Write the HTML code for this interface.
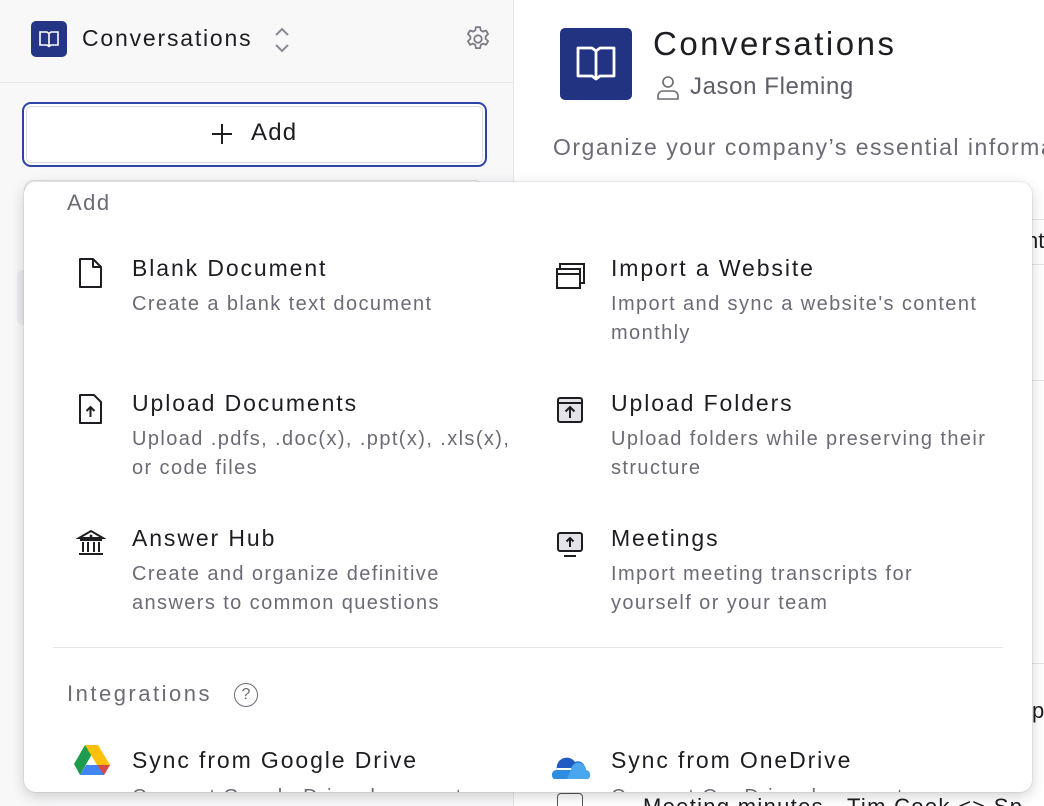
<!DOCTYPE html>
<html><head><meta charset="utf-8"><style>
*{box-sizing:border-box;margin:0;padding:0}
html,body{width:1044px;height:806px;overflow:hidden}
body{position:relative;background:#fff;font-family:"Liberation Sans",sans-serif;color:#1d1d22}
.side{position:absolute;left:0;top:0;width:514px;height:806px;background:#f8f8f9;border-right:1px solid #e6e6ea}
.abs{position:absolute}
.t{font-size:23px;color:#1d1d22;letter-spacing:1.9px;white-space:nowrap}
.d{font-size:20px;color:#6b6b76;line-height:29px;letter-spacing:1.4px}
.ic{position:absolute}
</style></head><body>
<div class="side">
  <div class="abs" style="left:31px;top:21px;width:36px;height:36px;background:#233584;border-radius:5px"></div>
  <svg class="abs" style="left:38px;top:29px" width="22" height="20" viewBox="0 0 22 20"><path d="M2 3h7l2 1.5 2-1.5h7v13h-7l-2 1.5-2-1.5H2z M11 4.5v12.5" fill="none" stroke="#fff" stroke-width="1.6"/></svg>
  <div class="abs" style="left:82px;top:25px;font-size:23px;letter-spacing:1.8px">Conversations</div>
  <svg class="abs" style="left:272px;top:26px" width="20" height="28"><path d="M4 9l6-6 6 6M4 19l6 6 6-6" fill="none" stroke="#8a8a94" stroke-width="2"/></svg>
  <svg class="abs" style="left:463px;top:24px" width="30" height="30" viewBox="0 0 24 24"><path d="M10.3 2.5h3.4l.5 2.6 1.7 1 2.5-.9 1.7 2.9-2 1.8v2l2 1.8-1.7 2.9-2.5-.9-1.7 1-.5 2.6h-3.4l-.5-2.6-1.7-1-2.5.9-1.7-2.9 2-1.8v-2l-2-1.8 1.7-2.9 2.5.9 1.7-1z" fill="none" stroke="#7a7a84" stroke-width="1.4" stroke-linejoin="round"/><circle cx="12" cy="12" r="3" fill="none" stroke="#7a7a84" stroke-width="1.4"/></svg>
  <div class="abs" style="left:0;top:82px;width:514px;height:1px;background:#e6e6ea"></div>
  <div class="abs" style="left:22px;top:102px;width:465px;height:65px;border:2px solid #2e43a8;border-radius:9px;background:#fff;box-shadow:inset 0 0 0 2px #fff,inset 0 0 0 3px #ddd"></div>
  <svg class="abs" style="left:211px;top:123px" width="22" height="22"><path d="M11 1v20M1 11h20" stroke="#1d1d22" stroke-width="2"/></svg>
  <div class="abs" style="left:251px;top:119px;font-size:24px;letter-spacing:1.2px;color:#1d1d22">Add</div>
  <div class="abs" style="left:24px;top:180px;width:460px;height:20px;border:1px solid #ddd;border-radius:10px;background:#fafafa"></div>
  <div class="abs" style="left:17px;top:270px;width:20px;height:55px;background:#ececef;border-radius:6px"></div>
</div>
<div class="abs" style="left:560px;top:28px;width:72px;height:72px;background:#223382;border-radius:5px"></div>
<svg class="abs" style="left:576px;top:46px" width="40" height="36" viewBox="0 0 40 36"><path d="M2 2h14l4 3 4-3h14v28h-14l-4 3-4-3H2z M20 5v28" fill="none" stroke="#fff" stroke-width="2.8" stroke-linejoin="round"/></svg>
<div class="abs" style="left:653px;top:25px;font-size:33px;letter-spacing:2.5px;color:#1d1d22">Conversations</div>
<svg class="abs" style="left:656px;top:75px" width="24" height="26"><circle cx="12" cy="7" r="5" fill="none" stroke="#6b6b76" stroke-width="1.6"/><path d="M2 24v-3a5 5 0 0 1 5-5h10a5 5 0 0 1 5 5v3z" fill="none" stroke="#6b6b76" stroke-width="1.6"/></svg>
<div class="abs" style="left:690px;top:73px;font-size:24px;letter-spacing:0.6px;color:#5e5e69">Jason Fleming</div>
<div class="abs" style="left:553px;top:134px;width:491px;overflow:hidden;font-size:23px;letter-spacing:1.5px;color:#6b6b76;white-space:nowrap">Organize your company’s essential information</div>
<div class="abs" style="left:1032px;top:219px;width:12px;height:1px;background:#e6e6ea"></div>
<div class="abs" style="left:1032px;top:264px;width:12px;height:1px;background:#e6e6ea"></div>
<div class="abs" style="left:1032px;top:380px;width:12px;height:1px;background:#e6e6ea"></div>
<div class="abs" style="left:1032px;top:663px;width:12px;height:1px;background:#e6e6ea"></div>
<div class="abs" style="left:1026px;top:228px;width:18px;overflow:hidden;font-size:22px">nt</div>
<div class="abs" style="left:1032px;top:698px;width:12px;overflow:hidden;font-size:22px">p</div>
<div class="abs" style="left:557px;top:793px;width:26px;height:13px;border:1.5px solid #555;border-bottom:none;border-radius:4px 4px 0 0"></div>
<div class="abs" style="left:643px;top:794px;width:401px;height:12px;overflow:hidden;font-size:22px;letter-spacing:1.3px;white-space:nowrap">Meeting minutes - Tim Cook &lt;&gt; Sp</div>

<div class="abs" style="left:24px;top:182px;width:1008px;height:610px;background:#fff;border-radius:12px;box-shadow:0 4px 14px rgba(0,0,0,.18),0 0 0 1px rgba(0,0,0,.05);overflow:hidden">
  <div class="abs" style="left:43px;top:8px;font-size:22px;letter-spacing:1.5px;color:#6b6b76">Add</div>
  <svg class="ic" style="left:54px;top:75px" width="26" height="32"><path d="M2 2h13l8 8v20H2z M15 2v8h8" fill="none" stroke="#1d1d22" stroke-width="2" stroke-linejoin="round"/></svg>
  <div class="abs t" style="left:108px;top:73px">Blank Document</div>
  <div class="abs d" style="left:108px;top:108px">Create a blank text document</div>
  <svg class="ic" style="left:530px;top:78px" width="32" height="32"><path d="M6 9V4h24v19h-4 M3 9h23v19H3z M3 14h23 M6 9h20" fill="none" stroke="#1d1d22" stroke-width="2"/></svg>
  <div class="abs t" style="left:587px;top:73px">Import a Website</div>
  <div class="abs d" style="left:587px;top:108px;width:380px">Import and sync a website's content monthly</div>

  <svg class="ic" style="left:54px;top:211px" width="26" height="32"><path d="M2 2h14l7 7v21H2z" fill="none" stroke="#1d1d22" stroke-width="2" stroke-linejoin="round"/><path d="M12.5 24v-10M8.5 18l4-4 4 4" fill="none" stroke="#1d1d22" stroke-width="2"/></svg>
  <div class="abs t" style="left:108px;top:208px">Upload Documents</div>
  <div class="abs d" style="left:108px;top:243px;width:380px">Upload .pdfs, .doc(x), .ppt(x), .xls(x), or code files</div>
  <svg class="ic" style="left:531px;top:213px" width="30" height="30"><rect x="3" y="3" width="24" height="24" rx="2" fill="#e4e4e8" stroke="#1d1d22" stroke-width="2"/><path d="M3 8h24" stroke="#1d1d22" stroke-width="2"/><path d="M15 23v-11M10.5 16.5l4.5-4.5 4.5 4.5" fill="none" stroke="#1d1d22" stroke-width="2"/></svg>
  <div class="abs t" style="left:587px;top:208px">Upload Folders</div>
  <div class="abs d" style="left:587px;top:243px;width:400px">Upload folders while preserving their structure</div>

  <svg class="ic" style="left:52px;top:346px" width="30" height="30"><path d="M3 10L15 3l12 7z M4 12h22 M7 14v10M12 14v10M18 14v10M23 14v10 M3 26h24" fill="none" stroke="#1d1d22" stroke-width="2"/><circle cx="15" cy="8" r="1.4" fill="#1d1d22"/></svg>
  <div class="abs t" style="left:108px;top:343px">Answer Hub</div>
  <div class="abs d" style="left:108px;top:378px;width:380px">Create and organize definitive answers to common questions</div>
  <svg class="ic" style="left:531px;top:348px" width="30" height="30"><rect x="3" y="3" width="24" height="18" rx="2" fill="#e4e4e8" stroke="#1d1d22" stroke-width="2"/><path d="M9 26h12" stroke="#1d1d22" stroke-width="2"/><path d="M15 17v-9M11.5 11.5L15 8l3.5 3.5" fill="none" stroke="#1d1d22" stroke-width="2"/></svg>
  <div class="abs t" style="left:587px;top:343px">Meetings</div>
  <div class="abs d" style="left:587px;top:378px;width:380px">Import meeting transcripts for yourself or your team</div>

  <div class="abs" style="left:29px;top:465px;width:950px;height:1px;background:#e6e6ea"></div>
  <div class="abs" style="left:43px;top:499px;font-size:22px;letter-spacing:2.5px;color:#6b6b76">Integrations</div>
  <div class="abs" style="left:210px;top:501px;width:24px;height:24px;border:1.6px solid #6b6b76;border-radius:50%;font-size:16px;color:#6b6b76;text-align:center;line-height:21px">?</div>

  <svg class="ic" style="left:49px;top:562px" width="38" height="34" viewBox="0 0 38 34"><path d="M12 1L1 20l6 11 12-21z" fill="#1e9c4d"/><path d="M12 1h13l12 20H24z" fill="#ffc107"/><path d="M7 31l6-10h24l-6 10z" fill="#4285f4"/><path d="M31 31l6-10H24z" fill="#ea4335" opacity=".9"/></svg>
  <div class="abs t" style="left:108px;top:565px">Sync from Google Drive</div>
  <div class="abs d" style="left:108px;top:601px">Connect Google Drive documents</div>
  <svg class="ic" style="left:528px;top:568px" width="40" height="30" viewBox="0 0 40 30"><path d="M5 20a10 10 0 0 1 18-8 7 7 0 0 1 10 6H5z" fill="#1e5cc4"/><path d="M2 29a5 5 0 0 1 4-9h28a5 5 0 0 1 2 9z" fill="#2f8de0"/><path d="M19 20a7 7 0 0 1 15 0 5 5 0 0 1 2 9H15z" fill="#4aa6ee"/></svg>
  <div class="abs t" style="left:587px;top:565px">Sync from OneDrive</div>
  <div class="abs d" style="left:587px;top:601px">Connect OneDrive documents</div>
</div>
</body></html>
